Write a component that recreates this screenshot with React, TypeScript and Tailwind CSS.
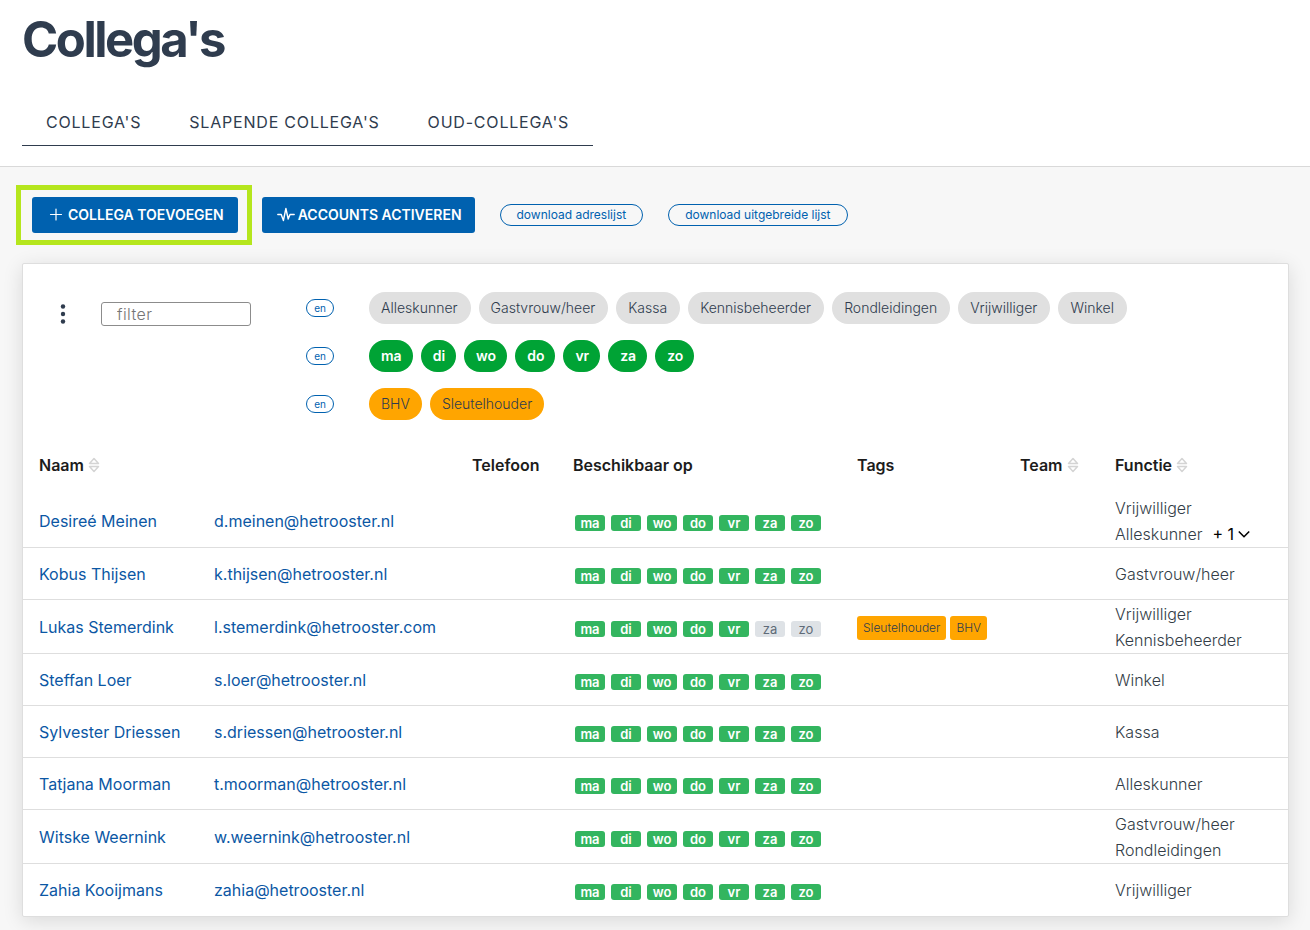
import { useState } from 'react';

const tabs = ["Collega's", "Slapende collega's", "Oud-collega's"];

const functions = [
  'Alleskunner',
  'Gastvrouw/heer',
  'Kassa',
  'Kennisbeheerder',
  'Rondleidingen',
  'Vrijwilliger',
  'Winkel',
];

const days = ['ma', 'di', 'wo', 'do', 'vr', 'za', 'zo'];

const tags = ['BHV', 'Sleutelhouder'];

type Colleague = {
  name: string;
  email: string;
  unavailable?: string[];
  tags?: string[];
  roles: string[];
  more?: number;
};

const colleagues: Colleague[] = [
  {
    name: 'Desireé Meinen',
    email: 'd.meinen@hetrooster.nl',
    roles: ['Vrijwilliger', 'Alleskunner'],
    more: 1,
  },
  {
    name: 'Kobus Thijsen',
    email: 'k.thijsen@hetrooster.nl',
    roles: ['Gastvrouw/heer'],
  },
  {
    name: 'Lukas Stemerdink',
    email: 'l.stemerdink@hetrooster.com',
    unavailable: ['za', 'zo'],
    tags: ['Sleutelhouder', 'BHV'],
    roles: ['Vrijwilliger', 'Kennisbeheerder'],
  },
  {
    name: 'Steffan Loer',
    email: 's.loer@hetrooster.nl',
    roles: ['Winkel'],
  },
  {
    name: 'Sylvester Driessen',
    email: 's.driessen@hetrooster.nl',
    roles: ['Kassa'],
  },
  {
    name: 'Tatjana Moorman',
    email: 't.moorman@hetrooster.nl',
    roles: ['Alleskunner'],
  },
  {
    name: 'Witske Weernink',
    email: 'w.weernink@hetrooster.nl',
    roles: ['Gastvrouw/heer', 'Rondleidingen'],
  },
  {
    name: 'Zahia Kooijmans',
    email: 'zahia@hetrooster.nl',
    roles: ['Vrijwilliger'],
  },
];

function SortIcon() {
  return (
    <svg className="h-4 w-3" viewBox="0 0 12 16" fill="none" stroke="#d4d4d4" strokeWidth="1.5" strokeLinejoin="round">
      <path d="M1.500 6.500 6 1.500l4.500 5z" />
      <path d="M1.500 9.500h9L6 14.500z" />
    </svg>
  );
}

function SortHeader({ label }: { label: string }) {
  return (
    <button type="button" className="flex items-center gap-1 font-semibold">
      {label}
      <SortIcon />
    </button>
  );
}

function EnToggle({ label }: { label: string }) {
  return (
    <button
      type="button"
      aria-label={label}
      className="flex h-[18px] w-7 items-center justify-center rounded-full border border-[#0061af] text-[10px] text-[#0061af]"
    >
      en
    </button>
  );
}

export default function App() {
  const [filter, setFilter] = useState('');

  return (
    <div className="min-h-screen bg-[#f7f7f7] pb-3.5 font-['Inter',sans-serif] text-[#2f3c4e]">
      {/* Page header */}
      <header className="border-b border-[#d9d9d9] bg-white px-[22px] pt-3 pb-5">
        <h1 className="text-[49px] leading-[56px] font-bold tracking-tighter">Collega's</h1>
        <nav className="mt-8 inline-flex border-b border-[#2f3c4e]">
          {tabs.map((tab) => (
            <a key={tab} href="#" className="px-6 pt-2.5 pb-[11px] text-base leading-6 tracking-wider uppercase">
              {tab}
            </a>
          ))}
        </nav>
      </header>

      {/* Actions */}
      <div className="flex flex-wrap items-center px-4 py-[18px]">
        <div className="border-5 border-[#b5e61d] py-[7px] pr-[9px] pl-[11px]">
          <button
            type="button"
            className="flex h-9 items-center gap-1 rounded-[3px] bg-[#0061af] pr-3.5 pl-4 text-sm font-semibold text-white uppercase"
          >
            <svg className="h-4 w-4" viewBox="0 0 16 16" fill="none" stroke="currentColor" strokeWidth="1.2" strokeLinecap="round">
              <path d="M8 2v11M2.5 7.5h11" />
            </svg>
            Collega toevoegen
          </button>
        </div>
        <button
          type="button"
          className="ml-2.5 flex h-9 items-center gap-[3px] rounded-[3px] bg-[#0061af] pr-[13px] pl-[15px] text-sm font-semibold text-white uppercase"
        >
          <svg className="h-4 w-[18px]" viewBox="0 0 18 16" fill="none" stroke="currentColor" strokeWidth="1.4" strokeLinecap="round" strokeLinejoin="round">
            <path d="M.8 7.500H4.200l2.200 6L8.900 1.500l2.300 10.500 1.800-4.500h4.200" />
          </svg>
          Accounts activeren
        </button>
        <button
          type="button"
          className="ml-[25px] h-[22px] rounded-full border border-[#0061af] px-4 text-xs leading-5 text-[#0061af]"
        >
          download adreslijst
        </button>
        <button
          type="button"
          className="ml-[25px] h-[22px] rounded-full border border-[#0061af] px-4 text-xs leading-5 text-[#0061af]"
        >
          download uitgebreide lijst
        </button>
      </div>

      <main className="mr-[21px] ml-[22px] rounded-xs border border-[#dedede] bg-white shadow-[0_4px_20px_rgba(0,0,0,0.12)]">
        {/* Filters */}
        <div className="flex items-start pt-7 pl-[34px]">
          <button type="button" aria-label="Menu" className="mt-2.5 flex h-6 w-3 items-center justify-center">
            <svg className="h-6 w-3" viewBox="0 0 12 24" fill="currentColor">
              <circle cx="6" cy="4.500" r="2.200" />
              <circle cx="6" cy="12" r="2.200" />
              <circle cx="6" cy="19.500" r="2.200" />
            </svg>
          </button>
          <input
            type="text"
            aria-label="filter"
            placeholder="filter"
            value={filter}
            onChange={(e) => setFilter(e.target.value)}
            className="mt-2.5 ml-8 h-6 w-[150px] rounded-[3px] border border-[#8c8c8c] px-[15px] text-base font-light tracking-wide placeholder:text-[#757575]"
          />
          <div className="ml-[55px] grid grid-cols-[28px_1fr] items-center gap-x-[35px] gap-y-4">
            <EnToggle label="Functies combineren" />
            <div className="flex flex-wrap gap-2">
              {functions.map((name) => (
                <button key={name} type="button" className="h-8 rounded-full bg-[#e0e0e0] pr-[13px] pl-3 text-sm font-light">
                  {name}
                </button>
              ))}
            </div>
            <EnToggle label="Dagen combineren" />
            <div className="flex flex-wrap gap-2">
              {days.map((day) => (
                <button key={day} type="button" className="h-8 rounded-full bg-[#00a335] pr-[11px] pl-3 text-sm font-semibold text-white">
                  {day}
                </button>
              ))}
            </div>
            <EnToggle label="Tags combineren" />
            <div className="flex flex-wrap gap-2">
              {tags.map((tag) => (
                <button key={tag} type="button" className="h-8 rounded-full bg-[#ffa500] px-3 text-sm font-light">
                  {tag}
                </button>
              ))}
            </div>
          </div>
        </div>

        <table className="mt-4 w-full table-fixed border-collapse text-left">
          <colgroup>
            <col className="w-[175px]" />
            <col className="w-[258px]" />
            <col className="w-[101px]" />
            <col className="w-[284px]" />
            <col className="w-[163px]" />
            <col className="w-[95px]" />
            <col />
          </colgroup>
          <thead>
            <tr className="h-[58px] text-base text-[#1c1c1c] *:px-4 *:font-semibold">
              <th>
                <SortHeader label="Naam" />
              </th>
              <th aria-label="E-mail" />
              <th>Telefoon</th>
              <th>Beschikbaar op</th>
              <th>Tags</th>
              <th>
                <SortHeader label="Team" />
              </th>
              <th>
                <SortHeader label="Functie" />
              </th>
            </tr>
          </thead>
          <tbody>
            {colleagues.map((person) => (
              <tr key={person.name} className="h-13 border-b border-[#dedede] last:border-b-0 *:px-4">
                <td className="whitespace-nowrap">
                  <a href="#" className="text-[#0b57a4]">
                    {person.name}
                  </a>
                </td>
                <td className="whitespace-nowrap">
                  <a href="#" className="text-[#0b57a4]">
                    {person.email}
                  </a>
                </td>
                <td />
                <td>
                  <div className="flex gap-1.5 pt-1 pl-0.5">
                    {days.map((day) =>
                      person.unavailable?.includes(day) ? (
                        <span key={day} className="h-4 w-[30px] rounded-[3px] bg-[#dee2e6] text-center text-[13px] leading-4 text-[#5f6b78]">
                          {day}
                        </span>
                      ) : (
                        <span key={day} className="h-4 w-[30px] rounded-[3px] bg-[#33b55f] text-center text-[13px] leading-4 font-semibold text-white">
                          {day}
                        </span>
                      )
                    )}
                  </div>
                </td>
                <td>
                  <div className="flex gap-1 pt-0.5">
                    {person.tags?.map((tag) => (
                      <span key={tag} className="h-6 rounded-[3px] bg-[#ffa500] px-1.5 text-xs leading-6 font-light">
                        {tag}
                      </span>
                    ))}
                  </div>
                </td>
                <td />
                <td className="pt-px font-light text-[#333d47]">
                  {person.roles.map((role, i) => (
                    <div key={role} className="flex h-[26px] items-center leading-[26px]">
                      {role}
                      {person.more && i === person.roles.length - 1 && (
                        <button type="button" className="ml-2.5 flex items-center gap-1 font-normal text-black">
                          + {person.more}
                          <svg className="h-3 w-3" viewBox="0 0 12 12" fill="none" stroke="currentColor" strokeWidth="1.600">
                            <path d="M.8 3.500 6 8.700l5.200-5.200" />
                          </svg>
                        </button>
                      )}
                    </div>
                  ))}
                </td>
              </tr>
            ))}
          </tbody>
        </table>
      </main>
    </div>
  );
}
